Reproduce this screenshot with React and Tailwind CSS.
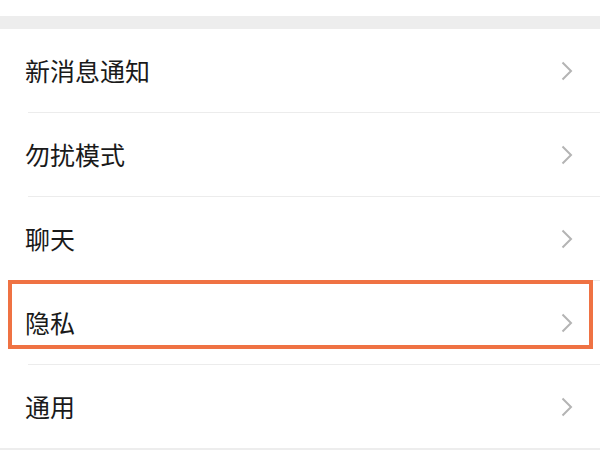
const items = ["新消息通知", "勿扰模式", "聊天", "隐私", "通用"];

function Chevron() {
    return (
        <svg width="12" height="20" viewBox="0 0 12 20" className="shrink-0">
            <path
                d="M1.5 1.5 L10 10 L1.5 18.5"
                fill="none"
                stroke="#b4b4b4"
                strokeWidth="2"
            />
        </svg>
    );
}

export default function App() {
    return (
        <div
            className="relative w-[600px] h-[450px] overflow-hidden bg-white"
            style={{ fontFamily: '"Noto Sans CJK SC", "Noto Sans", sans-serif' }}
        >
            <div className="h-4 bg-white"></div>
            <div className="h-[13px] bg-[#ededed]"></div>

            {/* settings list */}
            <div className="flex flex-col">
                {items.map((label, i) => (
                    <div key={label} className="flex flex-col">
                        <div
                            className={`flex items-center justify-between pl-[25px] pr-[27px] ${
                                i === 0 ? "h-[83px]" : "h-[83px]"
                            }`}
                        >
                            <span className="text-[25px] leading-none text-[#1a1a1a]">
                                {label}
                            </span>
                            <Chevron />
                        </div>
                        {i < items.length - 1 && (
                            <div className="ml-[28px] h-px bg-[#ececec]"></div>
                        )}
                    </div>
                ))}
            </div>
            <div className="h-4 bg-[#ededed]"></div>

            {/* highlight annotation */}
            <div className="absolute left-[8px] top-[280px] w-[585px] h-[69px] border-[4.5px] border-[#ef7243]"></div>
        </div>
    );
}
